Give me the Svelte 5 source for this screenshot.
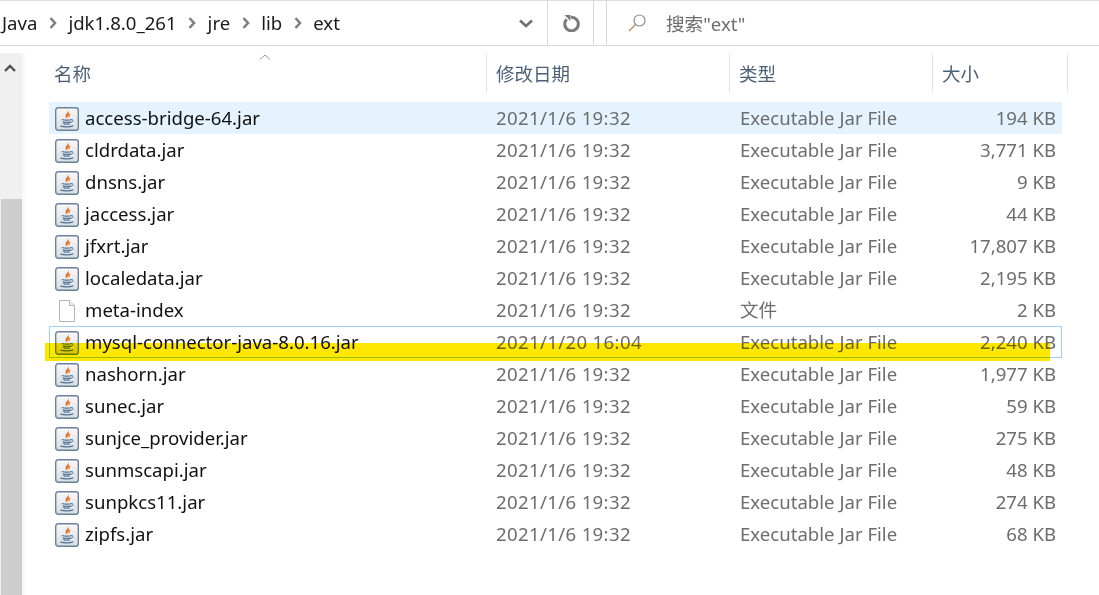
<script>
  const jar = 'Executable Jar File'
  const files = [
    { name: 'access-bridge-64.jar', date: '2021/1/6 19:32', type: jar, size: '194 KB', state: 'hover' },
    { name: 'cldrdata.jar', date: '2021/1/6 19:32', type: jar, size: '3,771 KB' },
    { name: 'dnsns.jar', date: '2021/1/6 19:32', type: jar, size: '9 KB' },
    { name: 'jaccess.jar', date: '2021/1/6 19:32', type: jar, size: '44 KB' },
    { name: 'jfxrt.jar', date: '2021/1/6 19:32', type: jar, size: '17,807 KB' },
    { name: 'localedata.jar', date: '2021/1/6 19:32', type: jar, size: '2,195 KB' },
    { name: 'meta-index', date: '2021/1/6 19:32', type: '文件', size: '2 KB', plain: true },
    { name: 'mysql-connector-java-8.0.16.jar', date: '2021/1/20 16:04', type: jar, size: '2,240 KB', state: 'focus' },
    { name: 'nashorn.jar', date: '2021/1/6 19:32', type: jar, size: '1,977 KB' },
    { name: 'sunec.jar', date: '2021/1/6 19:32', type: jar, size: '59 KB' },
    { name: 'sunjce_provider.jar', date: '2021/1/6 19:32', type: jar, size: '275 KB' },
    { name: 'sunmscapi.jar', date: '2021/1/6 19:32', type: jar, size: '48 KB' },
    { name: 'sunpkcs11.jar', date: '2021/1/6 19:32', type: jar, size: '274 KB' },
    { name: 'zipfs.jar', date: '2021/1/6 19:32', type: jar, size: '68 KB' },
  ]
  const crumbs = ['Java', 'jdk1.8.0_261', 'jre', 'lib', 'ext']
</script>

<div class="window">
  <div class="toolbar">
    <div class="address">
      <div class="crumbs">
        {#each crumbs as c, i}
          <span class="crumb">{c}</span>
          {#if i < crumbs.length - 1}
            <svg class="chev" width="8" height="12" viewBox="0 0 8 12"><path d="M1.500 1 6 6l-4.500 5" fill="none" stroke="#808080" stroke-width="2.600"/></svg>
          {/if}
        {/each}
      </div>
      <svg class="drop" width="14" height="9" viewBox="0 0 14 9"><path d="M1 1.500 7 7l6-5.500" fill="none" stroke="#6f6f6f" stroke-width="2.600"/></svg>
      <div class="refresh">
        <svg width="18" height="18" viewBox="0 0 18 18">
          <path d="M4.700 5.200A6.800 6.800 0 1 0 9 3.200" fill="none" stroke="#7b7b7b" stroke-width="3"/>
          <path d="M2.500 1h6v6z" fill="#7b7b7b"/>
        </svg>
      </div>
    </div>
    <div class="search">
      <svg width="20" height="20" viewBox="0 0 20 20">
        <circle cx="12.500" cy="7.500" r="5.500" fill="none" stroke="#8a8a8a" stroke-width="1.200"/>
        <path d="M8.500 11.500 2 18" stroke="#b8926a" stroke-width="1.500"/>
      </svg>
      <span class="query">搜索"ext"</span>
    </div>
  </div>

  <div class="body">
    <div class="scrollbar">
      <svg class="up" width="12" height="8" viewBox="0 0 12 8"><path d="M1 7 6 2l5 5" fill="none" stroke="#505050" stroke-width="2.400"/></svg>
      <div class="thumb"></div>
    </div>

    <div class="list">
      <div class="head">
        <svg class="sort" width="12" height="6" viewBox="0 0 12 6"><path d="M1 5.500 6 1l5 4.500" fill="none" stroke="#9a9a9a"/></svg>
        <div class="th name">名称</div>
        <div class="th">修改日期</div>
        <div class="th">类型</div>
        <div class="th last">大小</div>
      </div>

      {#each files as f}
        <div class="row {f.state ?? ''}">
          <div class="cell-name">
            {#if f.plain}
              <svg class="icon" width="24" height="24" viewBox="0 0 24 24">
                <path d="M4.500 1.500h10l5 5v16h-15z" fill="#fff" stroke="#b4b4b4"/>
                <path d="M14.500 1.500v5h5" fill="#f2f2f2" stroke="#b4b4b4"/>
              </svg>
            {:else}
              <svg class="icon" width="24" height="24" viewBox="0 0 24 24">
                <defs>
                  <linearGradient id="tile" x1="0" y1="0" x2="0" y2="1">
                    <stop offset="0" stop-color="#f8f8f8"/>
                    <stop offset="1" stop-color="#d9dde2"/>
                  </linearGradient>
                </defs>
                <rect x="0.700" y="0.700" width="22.600" height="22.600" rx="2.500" fill="url(#tile)" stroke="#6b8299" stroke-width="1.400"/>
                <path d="M13 3c1.300 2.600-3.700 4-2.300 6.800.3.700 1 1.300 1.500 1.800-.3-1.800 3.800-3.400 1.500-6.200.1-1-.1-1.700-.7-2.400z" fill="#e8772e"/>
                <path d="M16 6.500c-2.200 1.100-2.500 2.500-1.500 4-.1-1.200.6-2.400 1.500-4z" fill="#e8772e"/>
                <path d="M6.800 12.500c2.500.8 7.700.8 9.800 0M7.600 14.800c2.300.6 5.900.6 8.100 0M8.300 16.900c1.900.4 4.800.4 6.500 0" fill="none" stroke="#4f7194" stroke-width="1.200"/>
                <path d="M16.200 12.700c2.400-.6 2.700 2-.6 2.800" fill="none" stroke="#4f7194"/>
                <path d="M5.200 19c3 1.200 10 1.200 13-.2" fill="none" stroke="#4f7194" stroke-width="1.300"/>
              </svg>
            {/if}
            <span class="fname">{f.name}</span>
          </div>
          <div class="muted date">{f.date}</div>
          <div class="muted">{f.type}</div>
          <div class="muted size">{f.size}</div>
        </div>
      {/each}
    </div>
  </div>

  <!-- the marker stroke someone drew over the screenshot -->
  <div class="marker"></div>
</div>

<style>
  :global(body) { margin: 0; background: #fff; }
  .window {
    position: relative;
    width: 1099px;
    height: 595px;
    overflow: hidden;
    background: #fff;
    font-family: "Noto Sans", "Noto Sans CJK SC", sans-serif;
    font-size: 18.6px;
    color: #1a1a1a;
  }

  .toolbar { display: flex; height: 44px; border-top: 1px solid #dcdcdc; border-bottom: 1px solid #d9d9d9; }
  .address { width: 593px; display: flex; align-items: center; border-right: 1px solid #d9d9d9; flex: none; }
  .crumbs { display: flex; align-items: center; flex: 1; padding-left: 2px; }
  .crumb { line-height: 44px; }
  .chev { margin: 0 11.500px; }
  .drop { margin-right: 14px; }
  .refresh { width: 45px; height: 100%; border-left: 1px solid #d9d9d9; display: flex; align-items: center; justify-content: center; }
  .search { margin-left: 12px; flex: 1; border-left: 1px solid #d9d9d9; display: flex; align-items: center; gap: 19px; padding-left: 20px; color: #6d6d6d; }
  .query { margin-bottom: 2px; }

  .body { display: flex; height: 549px; }
  .scrollbar { width: 22px; flex: none; background: #f0f0f0; margin-top: 7px; display: flex; flex-direction: column; align-items: center; border-right: 3px solid #f8f8f8; }
  .up { margin-top: 11px; margin-left: -3px; }
  .thumb { margin-top: 127px; flex: 1; width: 21px; background: #cdcdcd; }

  .list { flex: 1; padding-left: 24px; }
  .head {
    position: relative;
    display: grid;
    grid-template-columns: 438px 243px 203px 135px;
    margin-top: 7px;
    height: 40px;
    margin-bottom: 9px;
  }
  .th { padding: 2px 0 0 9px; border-right: 1px solid #e5e5e5; color: #4c6078; line-height: 38px; font-size: 18.500px; }
  .th.name { padding-left: 5px; }
  .sort { position: absolute; left: 210px; top: 1px; }

  .row {
    display: grid;
    grid-template-columns: 437px 244px 192px 140px;
    width: 1013px;
    height: 32px;
    line-height: 31px;
    box-sizing: border-box;
    align-items: center;
  }
  .row.hover { background: #e5f3ff; }
  .row.focus { box-shadow: inset 0 0 0 1px #99d1ff; }
  .cell-name { display: flex; align-items: center; padding-left: 6px; gap: 6px; }
  .icon { flex: none; }
  .fname { color: #111; margin-bottom: 2px; }
  .muted { color: #6d6d6d; padding-left: 10px; white-space: nowrap; margin-bottom: 2px; }
  .date { letter-spacing: 0.35px; }
  .size { text-align: right; padding-left: 0; padding-right: 6px; }

  .marker {
    position: absolute;
    left: 45px;
    top: 343px;
    width: 1005px;
    height: 18px;
    background: #ffe800;
    mix-blend-mode: multiply;
  }
</style>
